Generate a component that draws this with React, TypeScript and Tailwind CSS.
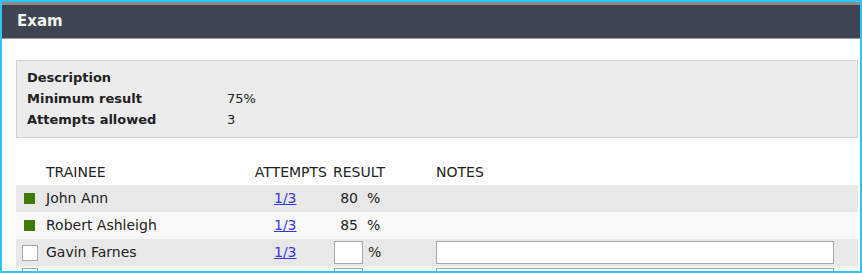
const rows = [
  { name: "John Ann", done: true, result: "80" },
  { name: "Robert Ashleigh", done: true, result: "85" },
  { name: "Gavin Farnes", done: false, result: "" },
];

export default function App() {
  return (
    <div className="h-[273px] w-[862px] overflow-hidden border-2 border-[#2ec4f5] bg-white font-['DejaVu_Sans',sans-serif] text-[13px] text-[#222]">
      <div className="h-[3px] bg-[#8c8c8c]" />
      <div className="flex h-[34px] items-center border-b border-[#9a9a9a] bg-[#3e4550] pl-[15px]">
        <h1 className="text-[15px] font-bold text-[#f2f2f2]">Exam</h1>
      </div>

      <div className="pl-[14px] pr-[2px] pt-[21px]">
        <div className="h-[78px] border border-[#d2d2d2] bg-[#ececec] px-[10px] pt-[7px]">
          <p className="h-[21px] font-bold">Description</p>
          <div className="flex h-[21px]">
            <span className="w-[200px] font-bold">Minimum result</span>
            <span>75%</span>
          </div>
          <div className="flex h-[21px]">
            <span className="w-[200px] font-bold">Attempts allowed</span>
            <span>3</span>
          </div>
        </div>

        <div className="text-[14px]">
          <div className="mt-[21px] grid h-[26px] grid-cols-[30px_201px_84px_105px_1fr] items-center">
            <span />
            <span>TRAINEE</span>
            <span className="pr-[4px] text-right">ATTEMPTS</span>
            <span className="pl-[2px]">RESULT</span>
            <span>NOTES</span>
          </div>

          {rows.map((r, i) => (
            <div
              key={r.name}
              className={`grid h-[27px] grid-cols-[30px_201px_84px_105px_1fr] items-center ${
                i % 2 === 0 ? "bg-[#e8e8e8]" : "bg-[#f9f9f9]"
              }`}
            >
              <span className="flex justify-center">
                {r.done ? (
                  <span className="ml-[-3px] block h-[11px] w-[11px] bg-[#3f7a0c]" />
                ) : (
                  <span className="ml-[-3px] block h-[16px] w-[16px] border border-[#a8a8a8] bg-white" />
                )}
              </span>
              <span>{r.name}</span>
              <span className="pl-[27px]">
                <a href="#" className="text-[#3535e6] underline">
                  1/3
                </a>
              </span>
              <span className="flex items-center pl-[3px]">
                {r.result ? (
                  <span className="w-[24px] text-right">{r.result}</span>
                ) : (
                  <span className="block h-[23px] w-[29px] border border-[#a8a8a8] bg-white" />
                )}
                <span className={r.result ? "ml-[9px]" : "ml-[5px]"}>%</span>
              </span>
              <span>
                {!r.result && (
                  <span className="block h-[23px] w-[398px] border border-[#a8a8a8] bg-white" />
                )}
              </span>
            </div>
          ))}

          <div className="grid h-[27px] grid-cols-[30px_201px_84px_105px_1fr] items-start bg-[#f9f9f9] pt-[2px]">
            <span className="flex justify-center">
              <span className="ml-[-3px] block h-[16px] w-[16px] border border-[#a8a8a8] bg-white" />
            </span>
            <span />
            <span />
            <span className="pl-[3px]">
              <span className="block h-[23px] w-[29px] border border-[#a8a8a8] bg-white" />
            </span>
            <span>
              <span className="block h-[23px] w-[398px] border border-[#a8a8a8] bg-white" />
            </span>
          </div>
        </div>
      </div>
    </div>
  );
}
